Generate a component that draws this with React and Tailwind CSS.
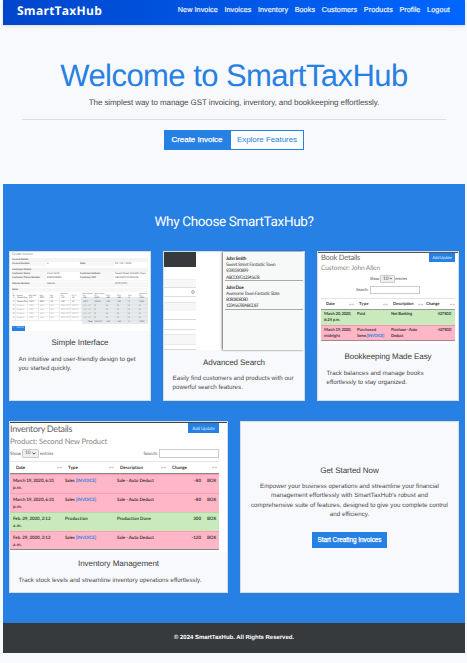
import { useLayoutEffect, useRef, useState } from "react";

const PINK = "bg-[#ffb6c6]";
const GREEN = "bg-[#c9eabc]";

// One line of text whose tracking is adjusted so that it spans `w` pixels.
function Fit({ w, className = "", children }) {
  const ref = useRef(null);
  const [spacing, setSpacing] = useState(0);
  useLayoutEffect(() => {
    const natural = ref.current.getBoundingClientRect().width;
    const count = ref.current.textContent.length;
    setSpacing((w - natural) / count);
  }, [w]);
  return (
    <span ref={ref} className={`block w-max shrink-0 whitespace-nowrap ${className}`} style={{ letterSpacing: `${spacing}px` }}>
      {children}
    </span>
  );
}

function SortIcon() {
  return (
    <svg viewBox="0 0 5 3" className="h-[3px] w-[5px] shrink-0" fill="none" stroke="#bbb" strokeWidth="0.6">
      <path d="M0 1.5h5M1.2.5L.3 1.5l.9 1M3.8.5l.9 1-.9 1" />
    </svg>
  );
}

function SelectTen({ className }) {
  return (
    <span className={`flex shrink-0 items-center justify-between rounded-[1px] border border-[#ccc] bg-[#efefef] px-[2px] text-[4.8px] text-[#555] ${className}`}>
      10
      <svg viewBox="0 0 4 3" className="h-[3px] w-[4px]" fill="none" stroke="#444" strokeWidth="0.9">
        <path d="M.5.6L2 2.2 3.5.6" />
      </svg>
    </span>
  );
}

const links = [
  ["New Invoice", 40], ["Invoices", 27], ["Inventory", 30], ["Books", 20.5],
  ["Customers", 35.5], ["Products", 29], ["Profile", 21], ["Logout", 23],
];

function Navbar() {
  return (
    <nav className="flex h-[25px] items-start justify-between bg-gradient-to-r from-[#0046cc] to-[#0066ff] pl-[14px] pr-[15px] shadow-[0_1px_3px_rgba(0,0,0,0.12)]">
      <Fit w={85} className="pt-[3px] font-['Open_Sans',sans-serif] text-[12px] font-bold leading-[16px] text-white">SmartTaxHub</Fit>
      <div className="flex gap-[6.6px] pt-[5px] text-[7.2px] leading-[10px] text-[#eef4ff] [-webkit-text-stroke:0.2px_#eef4ff]">
        {links.map(([name, w]) => <Fit key={name} w={w}>{name}</Fit>)}
      </div>
    </nav>
  );
}

function Hero() {
  return (
    <header className="flex h-[159px] flex-col items-center px-[19px] pt-[32px]">
      <Fit w={347.5} className="text-[31px] leading-[38px] text-[#2780e3]">Welcome to SmartTaxHub</Fit>
      <Fit w={290.5} className="mt-[3px] text-[8px] leading-[10px] text-[#4a4a4a]">
        The simplest way to manage GST invoicing, inventory, and bookkeeping effortlessly.
      </Fit>
      <div className="mt-[11px] h-px w-full bg-[#dcdfe2]" />
      <div className="mt-[10px] flex h-[20px] text-[8px]">
        <button className="flex w-[66px] items-center justify-center bg-[#2780e3] text-white [-webkit-text-stroke:0.25px_white]">
          <Fit w={51}>Create Invoice</Fit>
        </button>
        <button className="flex w-[74px] items-center justify-center border border-[#2780e3] bg-white text-[#2780e3]">
          <Fit w={60}>Explore Features</Fit>
        </button>
      </div>
    </header>
  );
}

function Card({ className = "", children }) {
  return <article className={`flex flex-col border border-[#d9dde2] bg-[#f8f9fc] ${className}`}>{children}</article>;
}

function Caption({ title, titleWidth, lines, className, bodyClass = "mt-[7px]" }) {
  return (
    <div className={`flex flex-col items-center ${className}`}>
      <Fit w={titleWidth} className="text-[8px] leading-[10px] text-[#37393b]">{title}</Fit>
      <div className={`flex w-full flex-col items-start pl-[8.5px] text-[6.2px] leading-[9px] text-[#4b4b4b] ${bodyClass}`}>
        {lines.map(([text, w]) => <Fit key={text} w={w}>{text}</Fit>)}
      </div>
    </div>
  );
}

function FormRow({ label, value, label2, value2, plain }) {
  return (
    <div className="flex h-[4.5px] items-center whitespace-nowrap bg-[#f7f7f7]">
      <span className="w-[34px] font-bold">{label}</span>
      <span className={`h-[4px] w-[34px] pl-px ${plain ? "" : "bg-white"}`}>{value}</span>
      <span className="w-[34px] font-bold">{label2}</span>
      <span className={`h-[4px] flex-1 pl-px ${plain ? "" : "bg-white"}`}>{value2}</span>
    </div>
  );
}

const invoiceHead = ["Sr No", "Product", "HSN/SAC", "Unit", "Qty", "Rate with GST", "GST %", "Rate without GST", "Total without GST", "CGST", "SGST", "IGST", "Total with GST"];
const blankRow = ["Product", "HSN", "Unit", "Qty", "With GST", "GST %", "W/o GST", "0", "0", "0", "0", "0"];
const invoiceRows = [
  ["1", "Mobile Box", "123", "BOX", "50", "118", "18", "100", "5000", "450", "450", "0", "5900"],
  ["2", "Testing One", "1232", "BOX", "30", "120", "12", "107.1", "3214.3", "193", "193", "0", "3600"],
  ["3", ...blankRow],
  ["4", ...blankRow],
  ["5", ...blankRow],
  ["6", ...blankRow],
];
const invoiceGrid = "grid grid-cols-[4px_12px_11px_10.5px_10.5px_11px_11px_11.5px_12px_11px_11px_11px_9.5px]";

function InvoiceShot() {
  return (
    <div className="h-[79px] bg-white px-[2px] font-['Lato',sans-serif] text-[2.5px] leading-[4px] text-[#555]">
      <Fit w={21} className="text-[3.6px] leading-[4px] text-[#888]">Create Invoice</Fit>
      <div className="mt-[1.5px] h-[4px] bg-[#f4f4f4] font-bold">Invoice Details</div>
      <FormRow label="Invoice Number" value="6" label2="Date" value2="22 / 02 / 2020" />
      <div className="mt-[1.5px] h-[4px] bg-[#f4f4f4] font-bold">Customer Details</div>
      <FormRow label="Customer Name" value="Kiran Smith" label2="Customer Address" value2="Sweet Street Fantastic Town" />
      <FormRow label="Customer Phone Number" value="8382308984" label2="Customer GST" value2="ABCD0FG12345678" />
      <div className="mt-[1.7px]">
        <FormRow label="Vehicle Number" value="Vehicle" value2="(GST/IGST)" plain />
      </div>
      <div className="mt-[1.5px] h-[4px] bg-[#f7f7f7] font-bold">Items</div>
      <div className={`${invoiceGrid} h-[5.3px] items-end text-[1.8px] leading-[2.2px] text-[#555]`}>
        {invoiceHead.map((t) => <span key={t} className="pl-[0.5px]">{t}</span>)}
      </div>
      {invoiceRows.map((row, r) => (
        <div key={r} className={`${invoiceGrid} h-[3.85px] text-[2px] leading-[3.5px]`}>
          {row.map((t, c) => (
            <span key={c} className={`whitespace-nowrap pl-px shadow-[inset_-0.5px_-0.5px_0_#d9dde0] ${c > 6 ? "bg-[#e6eaed]" : "bg-white"} ${r > 1 && c > 0 && c < 8 ? "text-[#aaa]" : "text-[#444]"}`}>{t}</span>
          ))}
        </div>
      ))}
      <div className={`${invoiceGrid} h-[3.5px] text-[2px] leading-[3.5px]`}>
        <span className="col-span-7" />
        <span className="bg-[#e6eaed] pr-px text-right font-bold">Total</span>
        {["8214.29", "643", "643", "0", "9500"].map((t, i) => <span key={i} className="bg-[#e6eaed] pl-px">{t}</span>)}
      </div>
      <div className="mt-[2px] flex h-[4.6px] w-[13px] items-center justify-around bg-[#2780e3] text-[2.4px] text-[#cfe4fb]">
        <span>+</span><span>Submit</span>
      </div>
    </div>
  );
}

function SearchShot() {
  const people = [
    [["John Smith", 20, true], ["Sweet Street Fantastic Town", 49.5], ["9390390899", 22], ["ABCD0FG12345678", 33]],
    [["John Doe", 17.5, true], ["Awesome Town Fantastic State", 53.5], ["8080808080", 21.5], ["123456789ABCDEF", 32.5]],
  ];
  return (
    <div className="flex h-[98px] bg-white">
      <div className="flex w-[32px] flex-col">
        <div className="h-[15px] bg-[#373a3c]" />
        <div className="mt-[12px] h-[8px] border-t border-[#eee] bg-[#f7f7f7]" />
        <div className="flex h-[10px] items-center justify-end border-y border-[#dcdfe2] pr-px">
          <span className="size-[4px] rounded-full border border-[#bbb] bg-[#ddd]" />
        </div>
        <div className="mt-[5px] h-[9px] border-t border-[#e6e6e6] bg-[#f7f7f7]" />
        <div className="h-[9px] border-b border-[#d5d9dd]" />
        <div className="h-[10px] border-b border-[#dcdfe2]" />
        <div className="mt-[4px] h-[11px] border-y border-[#eaeaea] bg-[#f7f7f7]" />
        <div className="mt-[4px] h-px bg-[#d5d9dd]" />
      </div>
      <div className="w-[27px]" />
      <div className="flex-1 bg-[#f7f8f8] pl-[2px] pr-px pt-[3px] font-['Lato',sans-serif] text-[4.7px] leading-[6.2px] text-[#444] shadow-[-1px_0_2px_rgba(0,0,0,0.6)]">
        {people.map((lines, i) => (
          <div key={i} className="mb-[2.6px] flex h-[26.2px] flex-col border-b border-[#a9a9a9] pl-px">
            {lines.map(([t, w, strong]) => <Fit key={t} w={w} className={strong ? "font-bold text-[#333]" : ""}>{t}</Fit>)}
          </div>
        ))}
      </div>
    </div>
  );
}

function HeadCell({ text, w, className = "" }) {
  return (
    <span className={`flex items-center justify-between font-bold text-[#333] ${className}`}>
      <Fit w={w}>{text}</Fit>
      <SortIcon />
    </span>
  );
}

function BookShot() {
  const grid = "grid grid-cols-[33px_34px_35px_32px]";
  return (
    <div className="flex h-[92px] flex-col border-t border-[#555] bg-white pl-[3px] pr-[3px] font-['Lato',sans-serif] text-[4.2px] leading-[6px] text-[#555]">
      <div className="flex h-[9px] justify-between">
        <Fit w={39} className="text-[7.5px] leading-[10px] text-[#666]">Book Details</Fit>
        <span className="flex w-[26px] items-center justify-center bg-[#2780e3] text-[#d9e9fb]"><Fit w={19.5}>Add Update</Fit></span>
      </div>
      <Fit w={59} className="mt-px text-[6.6px] leading-[10px] text-[#888]">Customer: John Allen</Fit>
      <div className="mt-[1px] flex h-[9px] items-center pl-[49px]">
        <Fit w={9}>Show</Fit>
        <SelectTen className="ml-px h-[8px] w-[15px]" />
        <Fit w={12}>entries</Fit>
      </div>
      <div className="mt-[3px] flex h-[8px] items-center pl-[35px]">
        <Fit w={12}>Search:</Fit>
        <span className="ml-[2px] h-[8px] w-[50px] border border-[#c8ccd0]" />
      </div>
      <div className={`${grid} mt-[4px] h-[12px] items-center border-b border-t border-b-[#999] border-t-[#e5e5e5]`}>
        <HeadCell text="Date" w={8.5} className="pl-[5px]" />
        <HeadCell text="Type" w={9.5} className="pl-[5px]" />
        <HeadCell text="Description" w={20.5} className="pl-[5px]" />
        <HeadCell text="Change" w={13.5} className="pl-[3px]" />
      </div>
      <div className={`${grid} h-[15px] pt-[1px] font-bold text-[#394537] ${GREEN}`}>
        <span className="flex flex-col pl-[3px]"><Fit w={27}>March 20, 2020,</Fit><Fit w={16}>6:24 p.m.</Fit></span>
        <span className="pl-[3px]"><Fit w={8}>Paid</Fit></span>
        <span className="pl-[3px]"><Fit w={21}>Net Banking</Fit></span>
        <span className="pr-[4px]"><Fit w={13.5} className="ml-auto">42750.0</Fit></span>
      </div>
      <div className={`${grid} h-[16px] border-b border-b-[#a88690] border-t border-t-[#e69eae] pt-[1px] font-bold text-[#4d363c] ${PINK}`}>
        <span className="flex flex-col pl-[3px]"><Fit w={27}>March 19, 2020,</Fit><Fit w={16}>midnight</Fit></span>
        <span className="flex flex-col pl-[3px]"><Fit w={19}>Purchased</Fit><Fit w={27}>Items <span className="text-[#2780e3]">[INVOICE]</span></Fit></span>
        <span className="flex flex-col pl-[3px]"><Fit w={26}>Purchase - Auto</Fit><Fit w={12}>Deduct</Fit></span>
        <span className="pr-[4px]"><Fit w={14} className="ml-auto">-42750.0</Fit></span>
      </div>
    </div>
  );
}

const stock = [
  ["March 19, 2020, 6:31", "p.m.", true, "Sale - Auto Deduct", "-80", 41],
  ["March 19, 2020, 6:31", "p.m.", true, "Sale - Auto Deduct", "-80", 41],
  ["Feb. 29, 2020, 2:12", "a.m.", false, "Production Done", "300", 37.5],
  ["Feb. 29, 2020, 2:12", "a.m.", true, "Sale - Auto Deduct", "-120", 37.5],
];

function InventoryShot() {
  const grid = "grid grid-cols-[52px_52px_52px_53px]";
  return (
    <div className="h-[130px] border-t border-[#444] bg-white pr-[8px] font-['Lato',sans-serif] text-[4.5px] leading-[7px] text-[#555]">
      <div className="flex h-[10px] justify-between">
        <Fit w={62} className="text-[9px] leading-[12px] text-[#666]">Inventory Details</Fit>
        <span className="flex w-[31px] items-center justify-center bg-[#2780e3] text-[#d9e9fb]"><Fit w={22.5}>Add Update</Fit></span>
      </div>
      <Fit w={97} className="mt-[3px] text-[7.6px] leading-[10px] text-[#888]">Product: Second New Product</Fit>
      <div className="mt-[3px] flex h-[9px] items-center">
        <Fit w={11}>Show</Fit>
        <SelectTen className="ml-px h-[9px] w-[17px]" />
        <Fit w={13.5} className="ml-px">entries</Fit>
        <Fit w={14.5} className="ml-auto">Search:</Fit>
        <span className="ml-px h-[9px] w-[60px] border border-[#c8ccd0]" />
      </div>
      <div className={`${grid} mt-[3px] h-[13px] items-center border-b border-t border-b-[#888] border-t-[#e5e5e5]`}>
        <HeadCell text="Date" w={9} className="pl-[6px]" />
        <HeadCell text="Type" w={10} className="pl-[6px]" />
        <HeadCell text="Description" w={23} className="pl-[6px]" />
        <HeadCell text="Change" w={15} className="pl-[6px] pr-[2px]" />
      </div>
      {stock.map(([date, time, sale, detail, amount, w], i) => (
        <div key={i} className={`${grid} h-[19px] border-t pt-[2px] font-bold ${sale ? "border-[#ff9cb1] text-[#4d363c]" : "border-[#b5d8a6] text-[#394537]"} ${sale ? PINK : GREEN} ${i === 3 ? "border-b border-b-[#888]" : ""}`}>
          <span className="flex flex-col pl-[3px]"><Fit w={w}>{date}</Fit><Fit w={9}>{time}</Fit></span>
          <span className="pl-[3px]">
            {sale ? <Fit w={31}>Sales <span className="text-[#2780e3]">[INVOICE]</span></Fit> : <Fit w={23}>Production</Fit>}
          </span>
          <span className="pl-[3px]"><Fit w={sale ? 37 : 34}>{detail}</Fit></span>
          <span className="flex justify-end gap-[6px] pr-[3px]"><span>{amount}</span><Fit w={9}>BOX</Fit></span>
        </div>
      ))}
    </div>
  );
}

function Features() {
  return (
    <section className="flex h-[439px] flex-col bg-[#2780e3] px-[6px]">
      <div className="flex h-[67px] justify-center pt-[30px]">
        <Fit w={159} className="font-['Roboto',sans-serif] text-[13.5px] leading-[17px] text-white">Why Choose SmartTaxHub?</Fit>
      </div>
      <div className="flex justify-between">
        <Card className="h-[150px] w-[142px]">
          <InvoiceShot />
          <Caption className="pt-[7px]" bodyClass="mt-[7px]" title="Simple Interface" titleWidth={57} lines={[["An intuitive and user-friendly design to get", 117], ["you started quickly.", 53]]} />
        </Card>
        <Card className="h-[150px] w-[142px]">
          <SearchShot />
          <Caption className="pt-[8px]" bodyClass="mt-[6px]" title="Advanced Search" titleWidth={62} lines={[["Easily find customers and products with our", 121], ["powerful search features.", 70.5]]} />
        </Card>
        <Card className="h-[150px] w-[142px]">
          <BookShot />
          <Caption className="pt-[8px]" title="Bookkeeping Made Easy" titleWidth={87} lines={[["Track balances and manage books", 97], ["effortlessly to stay organized.", 80.5]]} />
        </Card>
      </div>
      <div className="mt-[20px] flex justify-between">
        <Card className="h-[172px] w-[219px]">
          <InventoryShot />
          <Caption className="pt-[7px]" title="Inventory Management" titleWidth={81} lines={[["Track stock levels and streamline inventory operations effortlessly.", 183]]} />
        </Card>
        <Card className="h-[172px] w-[219px] items-center pt-[44px]">
          <Fit w={58.5} className="text-[8px] leading-[10px] text-[#37393b]">Get Started Now</Fit>
          <div className="mt-[6px] flex flex-col items-center text-[6.2px] leading-[9.3px] text-[#4b4b4b]">
            <Fit w={179}>Empower your business operations and streamline your financial</Fit>
            <Fit w={157}>management effortlessly with SmartTaxHub's robust and</Fit>
            <Fit w={197}>comprehensive suite of features, designed to give you complete control</Fit>
            <Fit w={39.5}>and efficiency.</Fit>
          </div>
          <button className="mt-[13px] flex h-[16px] w-[75px] items-center justify-center bg-[#2780e3] text-[6.4px] text-white [-webkit-text-stroke:0.25px_white]">
            <Fit w={64}>Start Creating Invoices</Fit>
          </button>
        </Card>
      </div>
    </section>
  );
}

export default function App() {
  return (
    <div className="h-[663px] w-[467px] overflow-hidden bg-[#f8f9fc] pl-[3px] pr-[2px] font-['Liberation_Sans',Arial,sans-serif] [text-rendering:geometricPrecision]">
      <Navbar />
      <Hero />
      <Features />
      <footer className="flex h-[30px] items-center justify-center bg-[#373a3c] text-[6px] font-bold leading-[9px] text-white">
        <Fit w={120}>© 2024 SmartTaxHub. All Rights Reserved.</Fit>
      </footer>
    </div>
  );
}
